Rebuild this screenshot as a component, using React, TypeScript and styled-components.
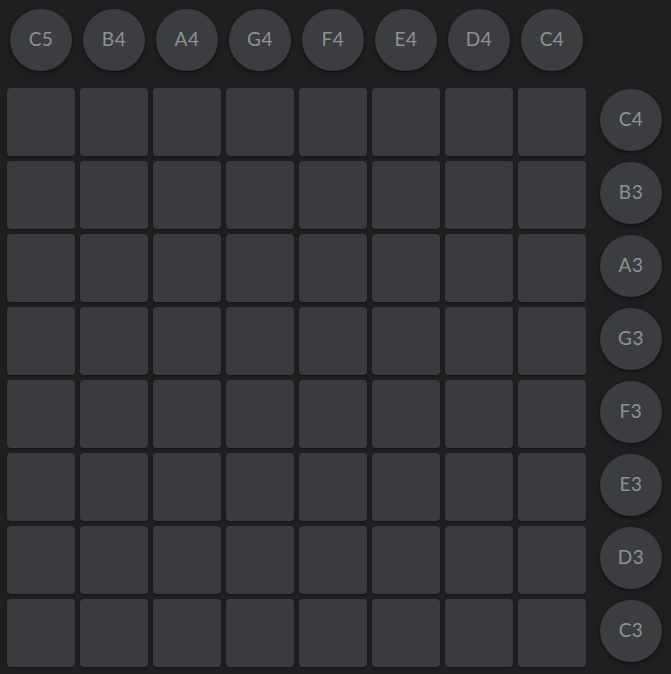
import React from "react";
import styled, { createGlobalStyle } from "styled-components";

const Global = createGlobalStyle`
  html, body { margin: 0; padding: 0; background: #1f1f20; }
  body { font-family: Lato, "Open Sans", sans-serif; }
`;

const Page = styled.div`
  width: 671px;
  height: 674px;
  box-sizing: border-box;
  padding: 9px 0 0 7px;
  background: #1f1f20;
  overflow: hidden;
`;

const TopRow = styled.div`
  display: grid;
  grid-template-columns: repeat(8, 68px);
  column-gap: 5px;
  justify-items: center;
  margin-bottom: 17px;
`;

const Main = styled.div`
  display: flex;
  align-items: flex-start;
`;

const PadGrid = styled.div`
  display: grid;
  grid-template-columns: repeat(8, 68px);
  grid-auto-rows: 68px;
  gap: 5px;
`;

const Pad = styled.div`
  background: #3a3b3f;
  border-radius: 4px;
  box-shadow: 0 1px 2px rgba(0, 0, 0, 0.35);
`;

const SideCol = styled.div`
  display: grid;
  grid-auto-rows: 62px;
  row-gap: 11px;
  margin-left: 14px;
  margin-top: 1px;
`;

const NoteButton = styled.div`
  width: 62px;
  height: 62px;
  box-sizing: border-box;
  padding-bottom: 3px;
  border-radius: 50%;
  background: #3c3d41;
  box-shadow: 0 2px 4px rgba(0, 0, 0, 0.45);
  display: flex;
  align-items: center;
  justify-content: center;
  color: #909195;
  font-family: Lato, "Open Sans", sans-serif;
  font-size: 19px;
  letter-spacing: 0.5px;
  user-select: none;
`;

const topNotes = ["C5", "B4", "A4", "G4", "F4", "E4", "D4", "C4"];
const sideNotes = ["C4", "B3", "A3", "G3", "F3", "E3", "D3", "C3"];

export default function App() {
  return (
    <Page>
      <Global />
      <TopRow>
        {topNotes.map((n, i) => (
          <NoteButton key={i}>{n}</NoteButton>
        ))}
      </TopRow>
      <Main>
        <PadGrid>
          {Array.from({ length: 64 }).map((_, i) => (
            <Pad key={i} />
          ))}
        </PadGrid>
        <SideCol>
          {sideNotes.map((n, i) => (
            <NoteButton key={i}>{n}</NoteButton>
          ))}
        </SideCol>
      </Main>
    </Page>
  );
}
